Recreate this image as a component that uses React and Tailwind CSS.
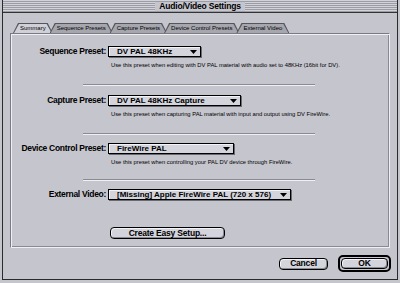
import React from "react";

function Arrow() {
  return (
    <svg width="7" height="4" viewBox="0 0 7 4" className="shrink-0">
      <polygon points="0,0 7,0 3.5,4" fill="#000" />
    </svg>
  );
}

function Dropdown({ w, children }) {
  return (
    <div
      className="h-[11px] flex items-center justify-between pl-[8px] pr-[3px] bg-[#d4d4dc] border border-black shadow-[1px_1px_0_#6a6a72,inset_1px_1px_0_#f4f4f8] text-[8px] font-bold leading-none text-black whitespace-nowrap"
      style={{ width: w }}
    >
      <span>{children}</span>
      <Arrow />
    </div>
  );
}

function Row({ label, w, value, desc }) {
  return (
    <div className="flex flex-col">
      <div className="flex items-center">
        <div className="w-[97px] pr-[2px] text-right text-[8.5px] font-bold leading-none tracking-[-0.3px] text-black whitespace-nowrap">
          {label}
        </div>
        <Dropdown w={w}>{value}</Dropdown>
      </div>
      {desc && (
        <div className="ml-[100px] mt-[5px] h-[7px] text-[5.8px] leading-[7px] text-black whitespace-nowrap">
          {desc}
        </div>
      )}
    </div>
  );
}

function Sep() {
  return <div className="ml-[72px] w-[232px] h-[2px] border-t border-[#8a8a92] border-b-[#f0f0f4] border-b" />;
}

function Tab({ children, active }) {
  return (
    <div className="relative -ml-[3px] first:ml-0 h-[10px]">
      <div className="absolute inset-0 bg-[#55555d] [clip-path:polygon(5px_0,calc(100%-5px)_0,100%_100%,0_100%)]" />
      <div
        className={
          "absolute inset-x-[1px] top-[1px] bottom-0 [clip-path:polygon(5px_0,calc(100%-5px)_0,100%_100%,0_100%)] " +
          (active ? "bg-[#d0d0d8]" : "bg-[#a6a6ae]")
        }
      />
      <div className="relative px-[7px] text-[6px] leading-[10px] text-black whitespace-nowrap">
        {children}
      </div>
    </div>
  );
}

const btn =
  "rounded-[4px] border border-black bg-[#d4d4dc] shadow-[inset_1px_1px_0_#f4f4f8,inset_-1px_-1px_0_#8a8a92] text-[8.5px] font-bold leading-none tracking-[-0.2px]";

export default function App() {
  return (
    <div className="w-[400px] h-[283px] bg-[#c5c5cd] overflow-hidden font-['Liberation_Sans',Arial,sans-serif] text-black">
      <div className="mx-[2px] h-[280px] border-x border-b border-[#2a2a2a] flex flex-col">
        {/* Title bar */}
        <div className="h-[13px] flex items-center justify-center border-b border-[#333] bg-[repeating-linear-gradient(180deg,#d2d2da_0px,#d2d2da_1px,#9c9ca4_1px,#9c9ca4_2px)] px-[2px] py-[2px]">
          <div className="flex-1 h-full" />
          <span className="px-[4px] bg-[#c5c5cd] text-[8.5px] font-bold leading-[9px] tracking-[-0.2px]">
            Audio/Video Settings
          </span>
          <div className="flex-1 h-full" />
        </div>

        {/* Tabs */}
        <div className="mt-[10px] ml-[10px] flex items-end">
          <Tab active>Summary</Tab>
          <Tab>Sequence Presets</Tab>
          <Tab>Capture Presets</Tab>
          <Tab>Device Control Presets</Tab>
          <Tab>External Video</Tab>
        </div>

        {/* Panel */}
        <div className="ml-[7px] mr-[7px] h-[215px] border-t border-l border-[#7a7a82] border-r border-b border-r-[#f0f0f4] border-b-[#f0f0f4] shadow-[inset_1px_1px_0_#f0f0f4,inset_-1px_-1px_0_#8a8a92] flex flex-col">
          <div className="mt-[12px]">
            <Row
              label="Sequence Preset:"
              w={93}
              value="DV PAL 48KHz"
              desc="Use this preset when editing with DV PAL material with audio set to 48KHz (16bit for DV)."
            />
          </div>
          <div className="mt-[15px]"><Sep /></div>
          <div className="mt-[9px]">
            <Row
              label="Capture Preset:"
              w={133}
              value="DV PAL 48KHz Capture"
              desc="Use this preset when capturing PAL material with input and output using DV FireWire."
            />
          </div>
          <div className="mt-[15px]"><Sep /></div>
          <div className="mt-[8px]">
            <Row
              label="Device Control Preset:"
              w={126}
              value="FireWire PAL"
              desc="Use this preset when controlling your PAL DV device through FireWire."
            />
          </div>
          <div className="mt-[13px]"><Sep /></div>
          <div className="mt-[8px]">
            <Row label="External Video:" w={183} value="[Missing] Apple FireWire PAL (720 x 576)" />
          </div>
          <div className="mt-[19px] ml-[99px]">
            <button className={"w-[115px] h-[12px] " + btn}>Create Easy Setup...</button>
          </div>
        </div>

        {/* Bottom buttons */}
        <div className="flex-1 flex items-center justify-end pr-[6px] gap-[10px]">
          <button className={"w-[49px] h-[12px] " + btn}>Cancel</button>
          <div className="w-[53px] h-[17px] rounded-[5px] border-2 border-black bg-[#c5c5cd] flex items-center justify-center">
            <button className={"w-[47px] h-[11px] " + btn}>OK</button>
          </div>
        </div>
      </div>
    </div>
  );
}
